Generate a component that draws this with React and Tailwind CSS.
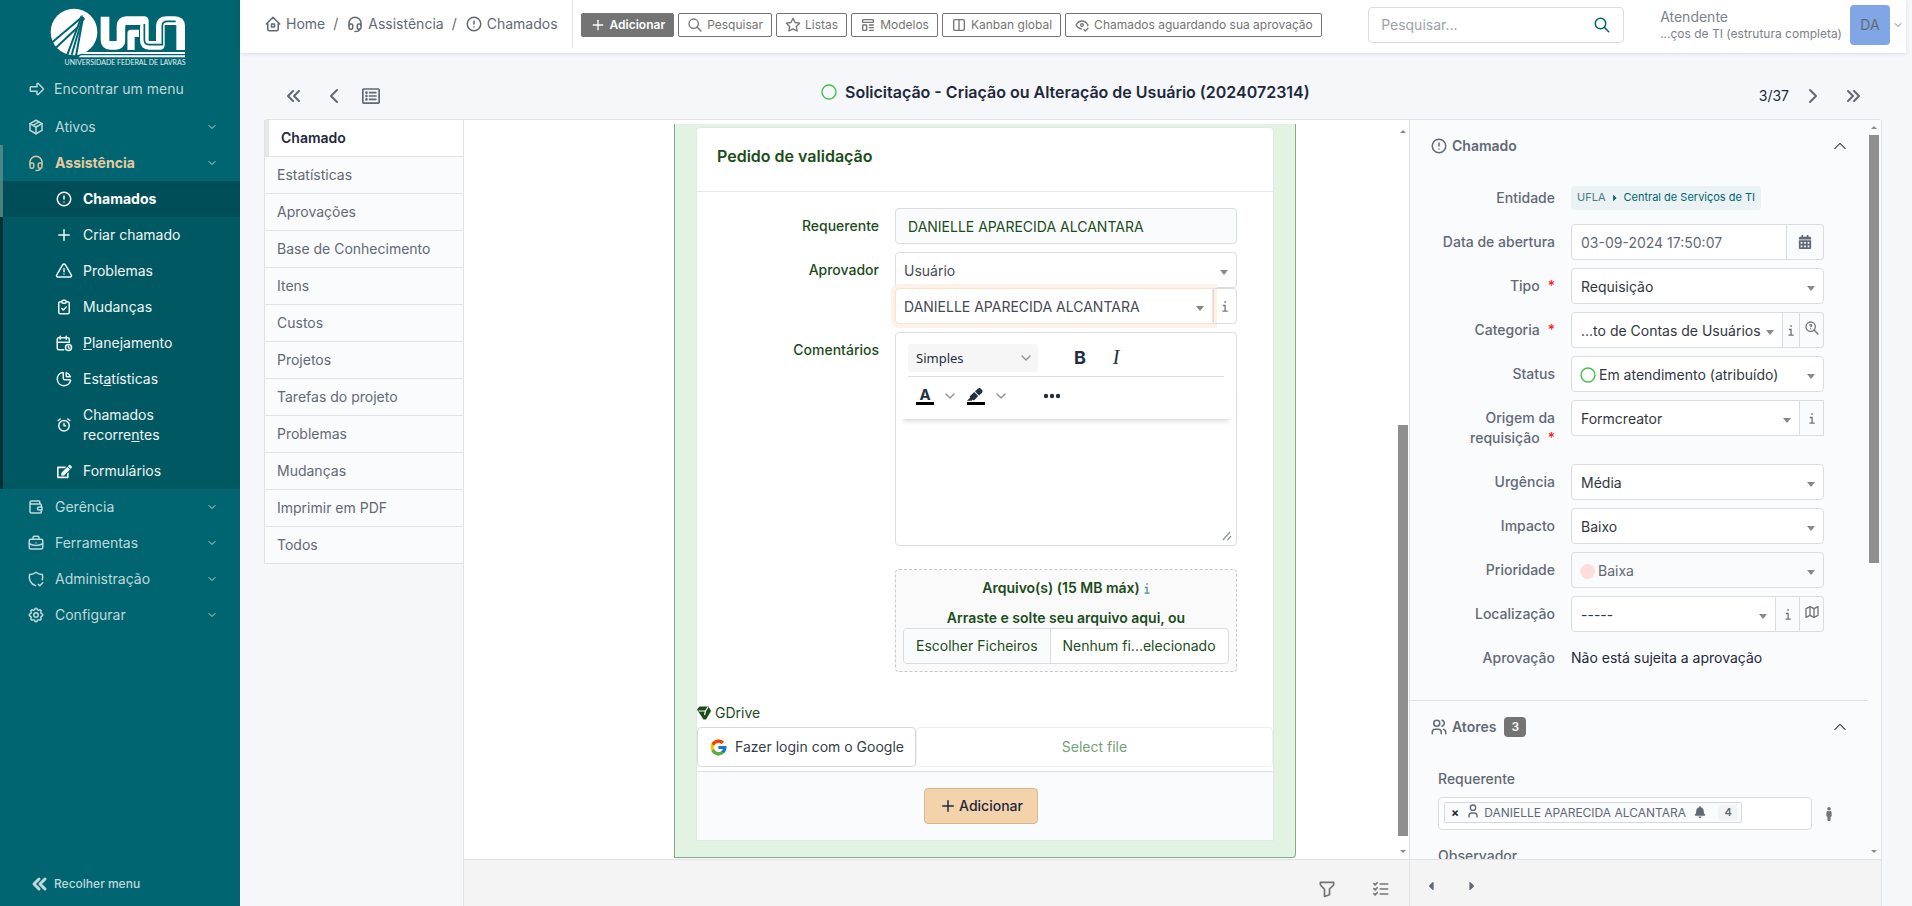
import React from "react";
import {
  TbHome2, TbHeadset, TbAlertCircle, TbPlus, TbSearch, TbStar, TbTemplate, TbLayoutColumns, TbEyeCheck,
  TbArrowBigRight, TbPackage, TbAlertTriangle, TbClipboardCheck, TbCalendarTime, TbChartPie, TbAlarm,
  TbWallet, TbBriefcase, TbShieldCheck, TbSettings, TbChevronDown, TbZoomQuestion, TbMap,
  TbFilter, TbListCheck, TbUsers, TbUser, TbChevronsLeft, TbChevronLeft, TbChevronRight, TbChevronsRight,
} from "react-icons/tb";
import { FaRegListAlt, FaEdit, FaCalendarAlt, FaBell, FaMale, FaCaretLeft, FaCaretRight } from "react-icons/fa";
import { BsChevronUp } from "react-icons/bs";
import { FcGoogle } from "react-icons/fc";

const SUB_ITEMS = [
  { icon: TbAlertCircle, label: "Chamados", active: true },
  { icon: TbPlus, label: "Criar chamado" },
  { icon: TbAlertTriangle, label: "Problemas" },
  { icon: TbClipboardCheck, label: "Mudanças" },
  { icon: TbCalendarTime, label: <><u>P</u>lanejamento</> },
  { icon: TbChartPie, label: <>Est<u>a</u>tísticas</> },
  { icon: TbAlarm, label: <>Chamados recorre<u>n</u>tes</> },
  { icon: FaEdit, label: "Formulários" },
];

const BOTTOM_ITEMS = [
  { icon: TbWallet, label: "Gerência" },
  { icon: TbBriefcase, label: "Ferramentas" },
  { icon: TbShieldCheck, label: "Administração" },
  { icon: TbSettings, label: "Configurar" },
];

const TABS = [
  "Estatísticas", "Aprovações", "Base de Conhecimento", "Itens", "Custos", "Projetos",
  "Tarefas do projeto", "Problemas", "Mudanças", "Imprimir em PDF", "Todos",
];

const ACTIONS = [
  { icon: TbSearch, label: "Pesquisar" },
  { icon: TbStar, label: "Listas" },
  { icon: TbTemplate, label: "Modelos" },
  { icon: TbLayoutColumns, label: "Kanban global" },
  { icon: TbEyeCheck, label: "Chamados aguardando sua aprovação" },
];

function Logo() {
  return (
    <div className="flex w-[145px] flex-col items-end">
      <svg viewBox="0 0 435 162" className="h-[54px] w-[145px]" role="img" aria-label="UFLA">
        <circle cx="87" cy="84" r="70" fill="#fff" />
        <g fill="none" stroke="#006570" strokeWidth="6">
          <path d="M20 116 L108 42 L67 152" />
          <path d="M32 132 L98 70" />
          <path d="M113 40 L80 152" />
          <path d="M114 40 L93 156" />
        </g>
        <path d="M108 34 L120 44 L117 50 L100 50 Z" fill="#006570" />
        <path d="M120 144 H420 V150 H112 Z M108 154 H420 V160 H100 Z" fill="#fff" />
        <g fill="none" stroke="#fff" strokeLinejoin="round">
          <path strokeWidth="26" d="M180 38 V108 Q180 124 196 124 H212 Q228 124 228 108 V66 Q228 50 244 50 H298 V110 Q298 124 312 124 H346 V66 Q346 50 362 50 H390 Q407 50 407 66 V138" />
          <path strokeWidth="22" d="M258 138 V88 H282" />
        </g>
        <g fill="none" stroke="#006570" strokeWidth="5">
          <path d="M244 138 V76 Q244 66 254 66 H286" />
          <path d="M298 60 V106 Q298 122 312 122 H352 V66 Q352 52 366 52 H392" />
        </g>
      </svg>
      <span className="mr-1 whitespace-nowrap font-['Lato',sans-serif] text-[7px] leading-[9px] text-white/90">
        UNIVERSIDADE FEDERAL DE LAVRAS
      </span>
    </div>
  );
}

function MenuItem({ icon: Icon, label }) {
  return (
    <a href="#" className="flex h-9 items-center pr-[22px] pl-[27px]">
      <Icon className="size-[18px]" />
      <span className="ml-[10px] flex-1">{label}</span>
      <TbChevronDown className="size-3" />
    </a>
  );
}

function Sidebar() {
  return (
    <aside className="flex w-60 shrink-0 flex-col bg-[#006570] text-[#bfd8db]">
      <div className="flex h-[71px] items-start justify-center pt-1 pr-[6px]">
        <Logo />
      </div>
      <nav aria-label="Menu principal">
        <a href="#" className="mb-[2px] flex h-9 items-center pl-7">
          <TbArrowBigRight className="size-[18px]" />
          <span className="ml-2">Encontrar um menu</span>
        </a>
        <MenuItem icon={TbPackage} label="Ativos" />
        <a href="#" className="flex h-9 items-center border-l-[3px] border-[#4d868a] pr-[22px] pl-6">
          <TbHeadset className="size-[18px] text-[#d5c4a1]" />
          <span className="ml-[10px] flex-1 font-bold text-[#e7caa0]">Assistência</span>
          <TbChevronDown className="size-3" />
        </a>
        <div className="bg-[#005962] text-[#f0f6f6]">
          {SUB_ITEMS.map(({ icon: Icon, label, active }, i) => (
            <a
              key={i}
              href="#"
              className={
                "flex min-h-9 items-center border-l-[3px] py-2 pr-10 pl-[52px] " +
                (active ? "border-[#4d7f80] bg-[#004f58] font-bold text-white" : "border-[#002f35]")
              }
            >
              <span className="flex w-[18px] shrink-0 justify-center">
                <Icon className={Icon === FaEdit ? "size-[15px]" : "size-[18px]"} />
              </span>
              <span className="ml-[10px] leading-5">{label}</span>
            </a>
          ))}
        </div>
        {BOTTOM_ITEMS.map((item) => (
          <MenuItem key={item.label} {...item} />
        ))}
      </nav>
      <button type="button" className="mt-auto flex h-11 items-center pl-7 text-xs font-medium">
        <TbChevronsLeft className="size-6" strokeWidth={3} />
        <span className="ml-[2px]">Recolher menu</span>
      </button>
    </aside>
  );
}

function Crumb({ icon: Icon, label }) {
  return (
    <a href="#" className="flex items-center gap-1">
      <Icon className="size-[18px]" />
      {label}
    </a>
  );
}

function Header() {
  return (
    <header className="mr-[6px] flex h-[53px] shrink-0 bg-white text-[#626976] shadow-[0_1px_4px_rgba(30,41,59,0.12)]">
      <nav aria-label="Trilha" className="mr-[14px] flex h-12 items-center gap-2 pl-6">
        <Crumb icon={TbHome2} label="Home" />
        <span>/</span>
        <Crumb icon={TbHeadset} label="Assistência" />
        <span>/</span>
        <Crumb icon={TbAlertCircle} label="Chamados" />
      </nav>
      <div className="flex h-12 items-center gap-1 border-l border-[#e6e7e9] pt-[2px] pl-2 text-xs text-[#747474]">
        <button type="button" className="flex h-6 items-center gap-1 rounded-xs border border-[#747474] bg-[#747474] px-2 font-semibold text-white">
          <TbPlus className="size-4" />
          Adicionar
        </button>
        {ACTIONS.map(({ icon: Icon, label }) => (
          <button key={label} type="button" className="flex h-6 items-center gap-1 rounded-xs border border-[#747474] px-2 whitespace-nowrap">
            <Icon className="size-4" />
            {label}
          </button>
        ))}
      </div>
      <div className="ml-auto flex h-[50px] items-center pr-[2px]">
        <form className="flex h-9 w-64 items-center rounded border border-[#dadcde] px-3" onSubmit={(e) => e.preventDefault()}>
          <input type="search" aria-label="Pesquisar" placeholder="Pesquisar..." className="w-full outline-none placeholder:text-[#9ca1ab]" />
          <button type="submit" aria-label="Buscar" className="text-[#006570]">
            <TbSearch className="size-[18px]" />
          </button>
        </form>
        <button type="button" className="ml-9 flex items-center text-left text-[#7b818c]">
          <span className="flex flex-col">
            <span className="leading-[18px]">Atendente</span>
            <span className="text-xs leading-4">...ços de TI (estrutura completa)</span>
          </span>
          <span className="ml-2 flex size-10 items-center justify-center rounded bg-[#80a6e5] text-[#626976]">DA</span>
          <TbChevronDown className="ml-[2px] size-3" />
        </button>
      </div>
    </header>
  );
}

function Caret() {
  return (
    <svg viewBox="0 0 8 5" aria-hidden="true" className="pointer-events-none absolute top-[17px] right-2 h-[5px] w-2">
      <path d="M0 0h8L4 5z" fill="#888" />
    </svg>
  );
}

function InfoIcon({ className = "h-[11px] w-[6px] text-[#747474]" }) {
  return (
    <svg viewBox="0 0 6 11" aria-hidden="true" className={"shrink-0 " + className} fill="none" stroke="currentColor" strokeWidth="1.3">
      <path d="M2.300 1H3.900M0.800 4.500H3.100V10.200M0.500 10.200H5.700" />
    </svg>
  );
}

function Select({ id, value, className = "", box = "rounded border", marker, disabled }) {
  return (
    <div className={"relative flex h-9 min-w-0 flex-1 items-center border-[#dadcde] pt-[2px] " + box + (disabled ? " bg-[#fafbfd]" : " bg-white")}>
      {marker}
      <select id={id} aria-label={id ? undefined : value} className={"h-full w-full appearance-none bg-transparent pr-4 outline-none " + className}>
        <option>{value}</option>
      </select>
      <Caret />
    </div>
  );
}

function AddonButton({ label, children, className = "w-6" }) {
  return (
    <button type="button" aria-label={label} className={"flex h-9 shrink-0 items-center justify-center border-y border-r border-[#dadcde] " + className}>
      {children}
    </button>
  );
}

function StatusCircle() {
  return (
    <svg viewBox="0 0 16 16" className="size-4 shrink-0" aria-hidden="true">
      <circle cx="8" cy="8" r="7" fill="none" stroke="#49bf4d" strokeWidth="1.4" />
    </svg>
  );
}

function ScrollBar({ className, thumb }) {
  return (
    <div aria-hidden="true" className={"flex w-3 shrink-0 flex-col items-center " + className}>
      <svg viewBox="0 0 6 3" className="h-[3px] w-[6px]"><path d="M0 3L3 0l3 3z" fill="#8b8b8b" /></svg>
      <div className={"flex flex-1 flex-col " + thumb}>
        <div className="h-full w-[10px] bg-[#8f8f8f]" />
      </div>
      <svg viewBox="0 0 6 3" className="h-[3px] w-[6px]"><path d="M0 0h6L3 3z" fill="#8b8b8b" /></svg>
    </div>
  );
}

function Tabs() {
  return (
    <nav aria-label="Abas do chamado" className="w-[199px] shrink-0 self-start border-b border-l border-[#e0e2e4] text-[#626976]">
      <a href="#" className="flex h-9 items-center border-l-4 border-[#e6e7e9] bg-white pl-3 font-semibold text-[#1e293b]">
        Chamado
      </a>
      {TABS.map((t) => (
        <a key={t} href="#" className="flex h-[37px] items-center border-t border-[#e0e2e4] bg-[#fafbfd] pl-3">
          {t}
        </a>
      ))}
    </nav>
  );
}

function FormRow({ id, label, children }) {
  return (
    <div className="mb-2 flex gap-4">
      <label htmlFor={id} className="flex-1 pt-2 text-right leading-5 font-medium">{label}</label>
      <div className="w-[342px]">{children}</div>
    </div>
  );
}

function Editor() {
  return (
    <div className="flex h-[214px] flex-col rounded border border-[#dadcde] bg-white text-[#222f3e]">
      <div className="mx-3 flex h-[44px] items-center border-b border-[#dcdddf] pt-[6px]">
        <div className="relative flex h-7 w-[130px] items-center rounded-[3px] bg-[#f6f6f7]">
          <select aria-label="Estilo" className="h-full w-full appearance-none bg-transparent px-2 pt-[2px] font-['Noto_Sans','Open_Sans',sans-serif] text-[13px] outline-none">
            <option>Simples</option>
          </select>
          <TbChevronDown className="pointer-events-none absolute right-1 size-4 text-[#8a929b]" />
        </div>
        <button type="button" aria-label="Negrito" className="ml-[34px] w-4 text-[18px] font-bold">B</button>
        <button type="button" aria-label="Itálico" className="ml-5 w-4 font-['Liberation_Serif',serif] text-[20px] italic">I</button>
      </div>
      <div className="mx-1 flex h-[42px] items-center pb-1 pl-4 shadow-[0_5px_5px_-3px_rgba(0,0,0,0.16)]">
        <button type="button" aria-label="Cor do texto" className="flex w-[18px] flex-col items-center">
          <span className="text-[15px] leading-[14px] font-bold">A</span>
          <span className="h-[3px] w-[18px] bg-black" />
        </button>
        <TbChevronDown className="ml-2 size-4 text-[#8a929b]" />
        <button type="button" aria-label="Cor de fundo" className="ml-[9px]">
          <svg viewBox="3 3 18 18" className="size-[18px]">
            <path fill="#222f3e" d="M7.7 16.7H3l3.3-3.3-.7-.8L10.2 8l4 4.1-4 4.2c-.2.2-.6.2-.8 0l-.6-.7-1.1 1.1zm5-7.5L11 7.4l3-2.9a2 2 0 0 1 2.6 0L18 6c.7.7.7 2 0 2.7l-2.9 2.9-1.8-1.8-.5-.6z" />
            <path d="M3 18h18v3H3z" />
          </svg>
        </button>
        <TbChevronDown className="ml-2 size-4 text-[#8a929b]" />
        <button type="button" aria-label="Mais" className="ml-[34px]">
          <svg viewBox="0 0 18 6" className="h-[6px] w-[18px]" fill="#222f3e">
            <circle cx="3" cy="3" r="2.2" /><circle cx="9" cy="3" r="2.2" /><circle cx="15" cy="3" r="2.2" />
          </svg>
        </button>
      </div>
      <div className="relative flex flex-1">
        <textarea id="comentarios" className="w-full flex-1 resize-none bg-transparent p-3 outline-none" />
        <svg viewBox="0 0 10 10" aria-hidden="true" className="absolute right-1 bottom-1 size-[10px]">
          <path d="M1 9L8 1M5.500 9L9 5" stroke="#8a929b" strokeWidth="1.300" fill="none" />
        </svg>
      </div>
    </div>
  );
}

function FileDrop() {
  return (
    <div className="rounded border border-dashed border-[#c8c8c8] bg-[#fafafa] px-[7px] pt-2 pb-[7px] font-semibold">
      <p className="flex items-center justify-center gap-1 leading-5">
        Arquivo(s) (15 MB máx) <InfoIcon className="h-[13px] w-[6px] text-[#4c9199]" />
      </p>
      <p className="mt-[10px] text-center leading-5">Arraste e solte seu arquivo aqui, ou</p>
      <label className="flex h-9 items-stretch rounded border border-[#dadcde] bg-white font-normal">
        <input type="file" className="sr-only" />
        <span className="flex items-center rounded-l bg-[#fafbfd] px-3">Escolher Ficheiros</span>
        <span className="flex items-center border-l border-[#dadcde] px-3">Nenhum fi...elecionado</span>
      </label>
    </div>
  );
}

function ValidationForm() {
  return (
    <section className="mr-[101px] ml-auto w-2/3 rounded-br border border-t-0 border-[#82ab88] bg-[#e2f2e3] px-[21px] pt-[3px] pb-4 text-[#1b4d1a]">
      <form className="rounded-t border border-[#e2e6e4] bg-white" onSubmit={(e) => e.preventDefault()}>
        <h3 className="h-16 border-b border-[#e6e7e9] pt-4 pl-5 text-base leading-6 font-semibold">Pedido de validação</h3>
        <div className="pt-4 pr-9 pl-5">
          <FormRow id="requerente" label="Requerente">
            <input id="requerente" readOnly value="DANIELLE APARECIDA ALCANTARA" className="h-9 w-full rounded border border-[#dadcde] bg-[#fafbfd] px-3 outline-none" />
          </FormRow>
          <FormRow id="aprovador" label="Aprovador">
            <div className="flex text-[#444b55]">
              <Select id="aprovador" value="Usuário" className="pl-2" />
            </div>
            <div className="flex text-[#444b55]">
              <Select
                value="DANIELLE APARECIDA ALCANTARA"
                className="pl-2"
                box="rounded-l border border-[#fbe3ca]! shadow-[0_0_0_4px_#fdf2e8]"
              />
              <AddonButton label="Informações" className="relative w-6 rounded-r border-l">
                <InfoIcon />
              </AddonButton>
            </div>
          </FormRow>
          <FormRow id="comentarios" label="Comentários">
            <Editor />
          </FormRow>
          <div className="mt-[23px] ml-auto w-[342px]">
            <FileDrop />
          </div>
        </div>
        <div className="mt-[31px] flex h-5 items-center gap-1">
          <svg viewBox="0 0 14 14" className="size-[14px]" aria-hidden="true" fill="#1b4d1a">
            <path d="M2.500 0.500H11.500L14 5L9 13.500H6.500L0 3.500Z" />
            <path d="M1.500 5H8.500L7.500 9M8.500 5L11 1" stroke="#fff" strokeWidth="1.200" fill="none" />
          </svg>
          GDrive
        </div>
        <div className="mt-1 flex h-10">
          <button type="button" className="flex items-center gap-[7px] rounded border border-[#d6d9dc] px-[11px] text-[#353d49]">
            <FcGoogle className="size-[19px]" />
            Fazer login com o Google
          </button>
          <button type="button" disabled className="flex-1 rounded border border-[#efefef] text-[#76a078]">Select file</button>
        </div>
        <div className="mt-1 flex h-[69px] items-center justify-center border-t border-[#e0e2e4] bg-[#fafbfd] pr-2">
          <button type="submit" className="flex h-9 items-center gap-[2px] rounded border border-[#d3b891] bg-[#f4d3ac] px-[14px] font-medium text-[#1e293b]">
            <TbPlus className="size-[18px]" />
            Adicionar
          </button>
        </div>
      </form>
    </section>
  );
}

function Field({ id, label, required, children }) {
  return (
    <div className="mb-2 flex gap-4">
      <label htmlFor={id} className="w-[117px] shrink-0 py-2 text-right leading-5 font-medium">
        {label}
        {required && <span className="ml-2 text-[#ff2020]">*</span>}
      </label>
      <div className="flex min-w-0 flex-1 text-[#31373f]">{children}</div>
    </div>
  );
}

function SectionTitle({ icon: Icon, title, badge }) {
  return (
    <h2 className="flex">
      <button type="button" className="flex flex-1 items-center text-left font-semibold">
        <Icon className="size-[18px]" />
        <span className="ml-1">{title}</span>
        {badge && <span className="ml-2 flex h-5 w-[22px] items-center justify-center rounded bg-[#747474] text-xs text-white">{badge}</span>}
        <BsChevronUp className="mr-[21px] ml-auto size-[14px] text-[#1e293b]" />
      </button>
    </h2>
  );
}

function DetailsPanel() {
  return (
    <div className="min-w-0 flex-1 overflow-hidden">
      <div className="border-b border-[#e0e2e4] pb-4">
        <div className="pt-4 pl-5">
          <SectionTitle icon={TbAlertCircle} title="Chamado" />
        </div>
        <div className="pt-6 pr-11 pl-7">
          <Field label="Entidade">
            <span className="mt-[6px] flex h-6 items-center gap-1 self-start rounded bg-[#ebf2f4] px-[6px] text-[11px] whitespace-nowrap text-[#006570]">
              <a href="#" className="text-[#4b7880]">UFLA</a>
              <FaCaretRight className="size-[10px]" />
              <a href="#">Central de Serviços de TI</a>
            </span>
          </Field>
          <Field id="abertura" label="Data de abertura">
            <input id="abertura" defaultValue="03-09-2024 17:50:07" className="h-9 w-full min-w-0 rounded-l border border-[#dadcde] bg-white pl-[9px] text-[#626976] outline-none" />
            <AddonButton label="Abrir calendário" className="w-[37px] rounded-r"><FaCalendarAlt className="size-[14px] text-[#626976]" /></AddonButton>
          </Field>
          <Field id="tipo" label="Tipo" required>
            <Select id="tipo" value="Requisição" className="pl-[9px]" />
          </Field>
          <Field id="categoria" label="Categoria" required>
            <Select id="categoria" value="...to de Contas de Usuários" className="pl-[9px]" box="rounded-l border" />
            <AddonButton label="Informações" className="w-[17px]"><InfoIcon /></AddonButton>
            <AddonButton label="Buscar categoria" className="w-6 rounded-r pb-1"><TbZoomQuestion className="size-4 text-[#747474]" /></AddonButton>
          </Field>
          <Field id="status" label="Status">
            <Select id="status" value="Em atendimento (atribuído)" className="pl-[3px]" marker={<span className="pl-2"><StatusCircle /></span>} />
          </Field>
          <Field id="origem" label="Origem da requisição" required>
            <Select id="origem" value="Formcreator" className="pl-[9px]" box="rounded-l border" />
            <AddonButton label="Informações"><InfoIcon /></AddonButton>
          </Field>
          <Field id="urgencia" label="Urgência">
            <Select id="urgencia" value="Média" className="pl-[9px]" />
          </Field>
          <Field id="impacto" label="Impacto">
            <Select id="impacto" value="Baixo" className="pl-[9px]" />
          </Field>
          <Field id="prioridade" label="Prioridade">
            <Select id="prioridade" value="Baixa" disabled className="pl-[3px] text-[#626976]" marker={<span className="ml-2 size-[15px] shrink-0 rounded-full bg-[#ffdddd]" />} />
          </Field>
          <Field id="localizacao" label="Localização">
            <Select id="localizacao" value="-----" className="pl-[9px]" box="rounded-l border" />
            <AddonButton label="Informações"><InfoIcon /></AddonButton>
            <AddonButton label="Mapa" className="w-6 rounded-r pb-1"><TbMap className="size-4 text-[#747474]" /></AddonButton>
          </Field>
          <Field label="Aprovação">
            <span className="py-2 leading-5 text-[#1e293b]">Não está sujeita a aprovação</span>
          </Field>
        </div>
      </div>
      <div className="pt-4 pl-5">
        <SectionTitle icon={TbUsers} title="Atores" badge="3" />
      </div>
      <div className="pt-8 pr-8 pl-7">
        <label htmlFor="ator" className="block leading-5 font-medium">Requerente</label>
        <div className="mt-2 flex items-center">
          <div className="flex h-[33px] min-w-0 flex-1 items-center rounded border border-[#dadcde] bg-white px-[5px] pb-[2px]">
            <span className="flex h-[21px] shrink-0 items-center rounded-xs border border-[#d6d9dc] bg-[#fafbfd] pr-[3px] pl-[6px] text-xs whitespace-nowrap">
              <button type="button" aria-label="Remover" className="font-bold text-[#1e293b]">×</button>
              <TbUser className="mb-1 ml-[6px] size-4" />
              <span className="ml-[3px]">DANIELLE APARECIDA ALCANTARA</span>
              <FaBell className="mb-[2px] ml-2 size-3" />
              <span className="ml-3 flex h-4 w-5 items-center justify-center rounded bg-[#f1f3f5] text-[11px] font-semibold">4</span>
            </span>
            <input id="ator" className="w-0 min-w-0 flex-1 outline-none" />
          </div>
          <button type="button" aria-label="Atribuir a mim" className="ml-[10px] shrink-0"><FaMale className="size-[14px] text-[#747474]" /></button>
        </div>
        <p className="mt-4 leading-5 font-medium">Observador</p>
      </div>
    </div>
  );
}

function RecordNav() {
  return (
    <div className="flex h-[66px] shrink-0 items-center pt-5 pr-[17px] pl-[18px] text-[#626976]">
      <button type="button" aria-label="Primeiro"><TbChevronsLeft className="size-6" /></button>
      <button type="button" aria-label="Anterior" className="ml-4"><TbChevronLeft className="size-6" /></button>
      <button type="button" aria-label="Lista" className="ml-4"><FaRegListAlt className="size-[18px]" /></button>
      <h1 className="flex flex-1 items-center justify-center gap-2 pr-2 pb-2 text-base font-semibold text-[#1e293b]">
        <StatusCircle />
        Solicitação - Criação ou Alteração de Usuário (2024072314)
      </h1>
      <span className="text-[#1e293b]">3/37</span>
      <button type="button" aria-label="Próximo" className="ml-3"><TbChevronRight className="size-6" /></button>
      <button type="button" aria-label="Último" className="ml-4"><TbChevronsRight className="size-6" /></button>
    </div>
  );
}

export default function App() {
  return (
    <div className="flex h-screen bg-[#f5f7fb] font-['Inter',sans-serif] text-sm text-[#626976]">
      <Sidebar />
      <div className="flex min-w-0 flex-1 flex-col">
        <Header />
        <main className="flex min-h-0 flex-1 flex-col pr-[30px] pl-6">
          <RecordNav />
          <div className="flex min-h-0 flex-1 rounded-t border-t border-[#e0e2e4]">
            <Tabs />
            <div className="flex min-w-0 flex-1 flex-col border-l border-[#e0e2e4] bg-white">
              <div className="flex min-h-0 flex-1">
                <div className="min-w-0 flex-1 overflow-hidden pt-1">
                  <ValidationForm />
                </div>
                <ScrollBar className="pt-[10px] pb-[6px]" thumb="pt-[292px] pb-[14px]" />
              </div>
              <div className="flex h-[47px] shrink-0 items-center justify-end gap-[34px] border-t border-[#e0e2e4] bg-[#f4f4f4] pt-3 pr-[18px] text-[#747474]">
                <button type="button" aria-label="Filtrar"><TbFilter className="size-5" /></button>
                <button type="button" aria-label="Tarefas"><TbListCheck className="size-5" /></button>
              </div>
            </div>
            <aside className="flex w-[473px] shrink-0 flex-col border-x border-[#e0e2e4] bg-[#fafbfd]">
              <div className="flex min-h-0 flex-1">
                <DetailsPanel />
                <ScrollBar className="mr-px pt-[6px] pb-[6px]" thumb="pt-[6px] pb-[287px]" />
              </div>
              <div className="flex h-[47px] shrink-0 items-center gap-[27px] border-t border-[#e0e2e4] bg-[#f4f4f4] pt-3 pb-[6px] pl-[14px] text-[#626976]">
                <button type="button" aria-label="Chamado anterior"><FaCaretLeft className="size-[14px]" /></button>
                <button type="button" aria-label="Próximo chamado"><FaCaretRight className="size-[14px]" /></button>
              </div>
            </aside>
          </div>
        </main>
      </div>
    </div>
  );
}
